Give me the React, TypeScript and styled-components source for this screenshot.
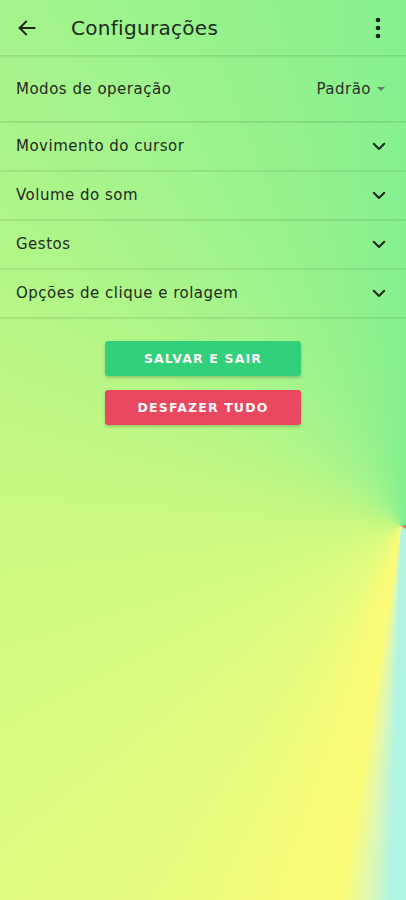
import React from "react";
import styled, { createGlobalStyle } from "styled-components";

const Global = createGlobalStyle`
  html, body { margin: 0; padding: 0; }
  body { font-family: "DejaVu Sans", "Open Sans", sans-serif; }
  #root { min-height: 100vh; }
`;

const Screen = styled.div`
  width: 406px;
  height: 900px;
  overflow: hidden;
  background: conic-gradient(
    from 0deg at 401px 526px,
    #86f08e 0deg,
    #76ec8e 50deg,
    #6ce890 74deg,
    #ee6870 86deg,
    #f06a78 110deg,
    #b8f2e0 130deg,
    #b0f4e4 181.5deg,
    #e0f8b4 185deg,
    #fcfc78 189deg,
    #f8fc78 197deg,
    #e8fc7e 212deg,
    #dcfc80 235deg,
    #c4f882 281deg,
    #a4f48c 323deg,
    #86f08e 360deg
  );
  display: flex;
  flex-direction: column;
`;

const AppBar = styled.header`
  height: 55px;
  display: flex;
  align-items: center;
  padding: 0 25px 0 16px;
  border-bottom: 1px solid rgba(0, 0, 0, 0.1);
  box-shadow: 0 1px 2px rgba(0, 0, 0, 0.08);
`;

const Title = styled.h1`
  flex: 1;
  margin: 0 0 0 33px;
  font-size: 20px;
  font-weight: 400;
  color: #1e2a1e;
  letter-spacing: 0.3px;
`;

const IconButton = styled.span`
  display: flex;
  align-items: center;
  justify-content: center;
`;

const Row = styled.div<{ $h?: number }>`
  height: ${(p) => p.$h ?? 48}px;
  display: flex;
  align-items: center;
  justify-content: space-between;
  padding: 0 18px 0 16px;
  border-bottom: 1px solid rgba(0, 0, 0, 0.1);
  box-shadow: 0 1px 1px rgba(0, 0, 0, 0.05);
`;

const Label = styled.span`
  font-size: 15px;
  color: #232a22;
  letter-spacing: 0.5px;
`;

const Select = styled.span`
  display: flex;
  align-items: center;
  gap: 6px;
  font-size: 15px;
  letter-spacing: 0.5px;
  color: #2a302a;
  margin-right: 3px;
`;

const Caret = styled.span`
  width: 0;
  height: 0;
  border-left: 4px solid transparent;
  border-right: 4px solid transparent;
  border-top: 4px solid #6a766a;
`;

const Buttons = styled.div`
  display: flex;
  flex-direction: column;
  align-items: center;
  gap: 14px;
  margin-top: 23px;
`;

const Button = styled.button<{ $bg: string }>`
  width: 196px;
  height: 35px;
  border: none;
  border-radius: 3px;
  background: ${(p) => p.$bg};
  color: #fdf8f8;
  font-family: "DejaVu Sans", sans-serif;
  font-weight: 700;
  font-size: 12.5px;
  letter-spacing: 1.15px;
  box-shadow: 0 2px 3px rgba(0, 0, 0, 0.18);
`;

const Chevron = () => (
  <svg width="18" height="18" viewBox="0 0 24 24" fill="none" stroke="#1e241e" strokeWidth="2.6" strokeLinecap="round" strokeLinejoin="round">
    <path d="M5 9l7 7 7-7" />
  </svg>
);

const items = ["Movimento do cursor", "Volume do som", "Gestos", "Opções de clique e rolagem"];

export default function App() {
  return (
    <>
      <Global />
      <Screen>
        <AppBar>
          <IconButton>
            <svg width="22" height="22" viewBox="0 0 24 24" fill="none" stroke="#1e241e" strokeWidth="2.2" strokeLinecap="square">
              <path d="M20 12H4.5M11 5l-7 7 7 7" />
            </svg>
          </IconButton>
          <Title>Configurações</Title>
          <IconButton>
            <svg width="6" height="22" viewBox="0 0 6 22" fill="#1e241e">
              <circle cx="3" cy="3" r="2.3" />
              <circle cx="3" cy="11" r="2.3" />
              <circle cx="3" cy="19" r="2.3" />
            </svg>
          </IconButton>
        </AppBar>
        <Row $h={65}>
          <Label>Modos de operação</Label>
          <Select>
            Padrão
            <Caret />
          </Select>
        </Row>
        {items.map((t) => (
          <Row key={t} $h={48}>
            <Label>{t}</Label>
            <Chevron />
          </Row>
        ))}
        <Buttons>
          <Button $bg="#33d07c">SALVAR E SAIR</Button>
          <Button $bg="#e84860">DESFAZER TUDO</Button>
        </Buttons>
      </Screen>
    </>
  );
}
